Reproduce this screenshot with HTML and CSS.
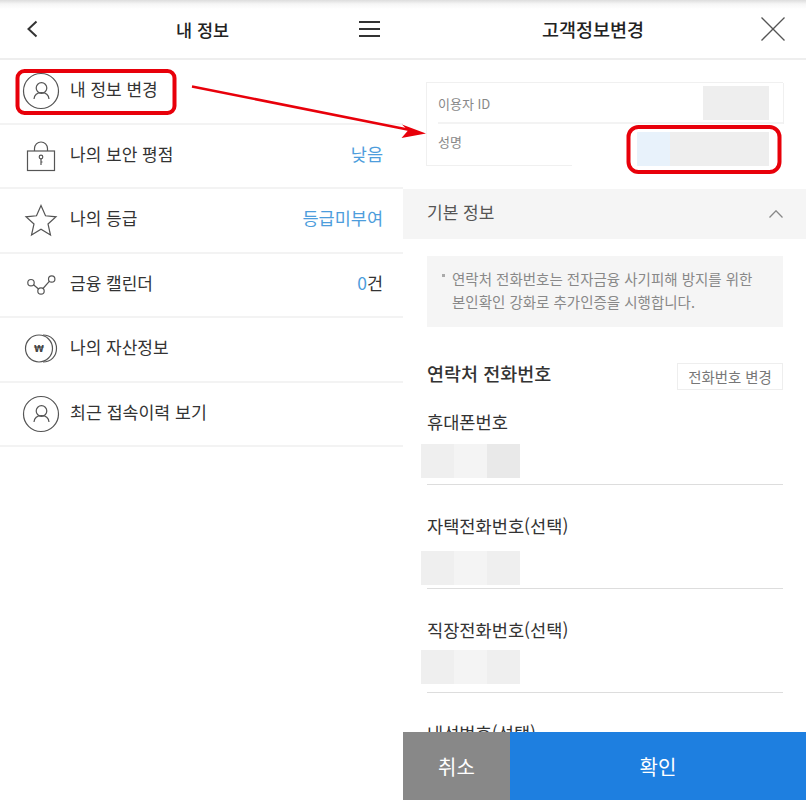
FILE: index.html
```html
<!DOCTYPE html>
<html lang="ko">
<head>
  <meta charset="UTF-8">
  <title>내 정보</title>
  <link rel="stylesheet" href="styles.css">
</head>
<body>

  <div class="screens">

    <section class="panel">
      <header class="topbar">
        <svg class="back-icon" width="46" height="30" viewBox="0 0 46 30"><path d="M36.500 7.500L28.500 15l8 7.500"/></svg>
        <h1 class="topbar-title">내 정보</h1>
        <svg class="menu-icon" width="21" height="16" viewBox="0 0 21 16"><path d="M0 1h21M0 8h21M0 15h21"/></svg>
      </header>

      <ul class="menu">
        <li class="menu-row">
          <svg class="row-icon" width="46" height="46" viewBox="0 0 46 46"><circle cx="23" cy="23" r="17.500"/><circle cx="23.500" cy="20" r="5.300"/><path d="M16 31c.5-4.500 3.500-6.300 7.500-6.300s7 1.800 7.500 6.300"/></svg>
          <span class="row-label">내 정보 변경</span>
        </li>
        <li class="menu-row">
          <svg class="row-icon" width="46" height="46" viewBox="0 0 46 46"><rect x="9.500" y="18" width="27" height="19.500"/><path d="M16.500 18v-2.500a6.500 6.500 0 0 1 13 0V18"/><circle cx="23" cy="24" r="1.800"/><path d="M23 25.800V32M23 29h1.500"/></svg>
          <span class="row-label">나의 보안 평점</span>
          <span class="row-value">낮음</span>
        </li>
        <li class="menu-row">
          <svg class="row-icon" width="46" height="46" viewBox="0 0 46 46"><path d="M23 8.500l4.500 10.300 10.500 1-8 7.200 2.500 11-9.500-5.700L13.500 38l2.500-11-8-7.200 10.500-1z"/></svg>
          <span class="row-label">나의 등급</span>
          <span class="row-value">등급미부여</span>
        </li>
        <li class="menu-row">
          <svg class="row-icon" width="46" height="46" viewBox="0 0 46 46"><circle cx="13" cy="20.700" r="3.200"/><circle cx="23" cy="29" r="3.200"/><circle cx="33.700" cy="17" r="3.200"/><path d="M15.500 22.700l5 4.300M25 26.500l6.500-7.300"/></svg>
          <span class="row-label">금융 캘린더</span>
          <span class="row-value"><span class="row-count">0</span><span class="row-unit">건</span></span>
        </li>
        <li class="menu-row">
          <svg class="row-icon" width="46" height="46" viewBox="0 0 46 46"><circle cx="21" cy="22.500" r="13.500"/><path d="M25 9c8 0 13.500 6 13.500 13.500S33 36 25 36"/><text class="won-mark" x="21" y="26" text-anchor="middle">₩</text></svg>
          <span class="row-label">나의 자산정보</span>
        </li>
        <li class="menu-row">
          <svg class="row-icon" width="46" height="46" viewBox="0 0 46 46"><circle cx="23" cy="23" r="17.500"/><circle cx="23.500" cy="20" r="5.300"/><path d="M16 31c.5-4.500 3.500-6.300 7.500-6.300s7 1.800 7.500 6.300"/></svg>
          <span class="row-label row-label-wide">최근 접속이력 보기</span>
        </li>
      </ul>
    </section>

    <section class="panel">
      <header class="topbar topbar-form">
        <h1 class="topbar-title">고객정보변경</h1>
        <svg class="close-icon" width="24" height="24" viewBox="0 0 24 24"><path d="M.5.500l23 23M23.500.500l-23 23"/></svg>
      </header>

      <div class="user-card">
        <div class="user-row user-row-id">
          <span class="user-label">이용자 ID</span>
          <span class="blur-box blur-id"></span>
        </div>
        <div class="user-row user-row-name">
          <span class="user-label">성명</span>
          <span class="blur-box blur-name"><i class="blur-blue"></i></span>
        </div>
        <div class="user-card-foot"></div>
      </div>

      <div class="section-band">
        <span>기본 정보</span>
        <svg class="fold-icon" width="14" height="8" viewBox="0 0 14 8"><path d="M.5 7.500L7 .8l6.500 6.700"/></svg>
      </div>

      <div class="notice">
        <i class="notice-dot"></i>
        <p>연락처 전화번호는 전자금융 사기피해 방지를 위한<br>본인확인 강화로 추가인증을 시행합니다.</p>
      </div>

      <div class="contact-head">
        <h2>연락처 전화번호</h2>
        <button class="change-btn">전화번호 변경</button>
      </div>

      <div class="field field-mobile">
        <label>휴대폰번호</label>
        <div class="blur-cells"><i class="c1"></i><i class="c2"></i><i class="c3"></i></div>
      </div>
      <div class="field field-home">
        <label>자택전화번호(선택)</label>
        <div class="blur-cells"><i class="c1"></i><i class="c2"></i><i class="c1"></i></div>
      </div>
      <div class="field field-work">
        <label>직장전화번호(선택)</label>
        <div class="blur-cells"><i class="c1"></i><i class="c2"></i><i class="c1"></i></div>
      </div>
      <div class="field field-ext">
        <label>내선번호(선택)</label>
      </div>

      <div class="actions">
        <button class="btn-cancel">취소</button>
        <button class="btn-ok">확인</button>
      </div>
    </section>

  </div>

  <svg class="marks" width="806" height="800" viewBox="0 0 806 800">
    <rect class="mark-box" x="17.500" y="71" width="157" height="42" rx="7"/>
    <rect class="mark-box" x="628.500" y="127" width="151" height="45" rx="10"/>
    <path class="mark-line" d="M192 86.500L410 130"/>
    <path class="mark-head" d="M426 133.500L402 124.500l6 6-6.500 7.500z"/>
  </svg>

</body>
</html>
```

FILE: styles.css
```css
* {
  box-sizing: border-box;
}
body {
  margin: 0;
  height: 800px;
  overflow: hidden;
  background: #fff;
  color: #333;
  font-family: "Noto Sans CJK KR", "Noto Sans", sans-serif;
}
h1, h2, p, ul {
  margin: 0;
  padding: 0;
}
button {
  font-family: inherit;
  border: 0;
  padding: 0;
}
.screens {
  display: flex;
  height: 800px;
}
.panel {
  position: relative;
  width: 403px;
  height: 800px;
  overflow: hidden;
}

/* top bar */
.topbar {
  display: flex;
  align-items: center;
  justify-content: space-between;
  height: 60px;
  padding-right: 23px;
  border-bottom: 2px solid #eee;
  background: linear-gradient(#ddd, #f6f6f6 4px, #fff 9px);
}
.topbar-title {
  font-size: 17.500px;
  font-weight: 500;
  color: #222;
}
.topbar-form {
  padding-left: 22px;
  padding-right: 21px;
}
.topbar-form .topbar-title {
  flex: 1;
  font-size: 18.500px;
  text-align: center;
}
.back-icon {
  fill: none;
  stroke: #333;
  stroke-width: 2;
}
.menu-icon {
  fill: none;
  stroke: #333;
  stroke-width: 2;
}
.close-icon {
  fill: none;
  stroke: #555;
  stroke-width: 1.300;
}

/* menu list */
.menu {
  list-style: none;
}
.menu-row {
  display: flex;
  align-items: center;
  height: 64.500px;
  padding: 0 20px 0 18px;
  border-bottom: 2px solid #f3f3f3;
}
.row-icon {
  flex: none;
  margin-right: 6px;
  fill: none;
  stroke: #555;
  stroke-width: 1.200;
}
.won-mark {
  fill: #444;
  stroke: none;
  font-family: "DejaVu Sans", sans-serif;
  font-size: 9px;
  font-weight: 700;
}
.row-label {
  flex: 1;
  margin-top: -5px;
  font-size: 17px;
  color: #333;
}
.row-label-wide {
  font-size: 17.300px;
}
.row-value {
  margin-top: -5px;
  font-size: 17.500px;
  color: #4d9ddc;
}
.row-count {
  color: #4d9ddc;
}
.row-unit {
  color: #333;
}

/* user card */
.user-card {
  margin: 22px 23px 0;
  border-top: 1px solid #f0f0f0;
  border-left: 1px solid #f0f0f0;
}
.user-row {
  display: flex;
  align-items: center;
  justify-content: space-between;
  height: 41px;
  margin-left: 11px;
  padding-right: 14px;
  font-size: 13px;
  color: #888;
}
.user-row-id {
  border-bottom: 2px solid #f3f3f3;
  box-shadow: 1px 0 0 #f0f0f0;
}
.user-row-id .user-label {
  margin-top: 1px;
}
.user-row-name .user-label {
  margin-top: -7px;
}
.blur-box {
  display: block;
  height: 34px;
  background: #eee;
}
.blur-id {
  width: 66px;
}
.blur-name {
  width: 132px;
  margin-top: 8px;
}
.blur-blue {
  display: block;
  width: 33px;
  height: 34px;
  background: #e8f2fb;
}
.user-card-foot {
  width: 145px;
  border-bottom: 1px solid #f0f0f0;
}

/* collapsible band */
.section-band {
  display: flex;
  align-items: center;
  justify-content: space-between;
  height: 50px;
  margin-top: 23px;
  padding: 0 23px 0 24px;
  background: #f5f5f5;
  font-size: 17px;
  color: #555;
}
.section-band span {
  margin-top: -5px;
}
.fold-icon {
  fill: none;
  stroke: #888;
  stroke-width: 1.300;
}

/* notice */
.notice {
  display: flex;
  height: 71px;
  margin: 17px 23px 0 24px;
  padding: 11px 0 0 15px;
  background: #f5f5f5;
  font-size: 14.500px;
  line-height: 23px;
  color: #888;
}
.notice-dot {
  flex: none;
  width: 3px;
  height: 3px;
  margin: 7px 7px 0 0;
  background: #aaa;
}

/* contact */
.contact-head {
  display: flex;
  align-items: flex-start;
  justify-content: space-between;
  height: 27px;
  margin: 36px 23px 0 24px;
}
.contact-head h2 {
  margin-top: -3px;
  font-size: 18.500px;
  font-weight: 500;
  color: #333;
}
.change-btn {
  width: 106px;
  height: 27px;
  background: #fff;
  border: 1px solid #eee;
  font-size: 14.400px;
  color: #777;
}

/* phone fields */
.field {
  margin: 0 23px 0 24px;
  border-bottom: 1px solid #ddd;
}
.field label {
  display: block;
  font-size: 17.600px;
  line-height: 27px;
  color: #333;
}
.field-mobile {
  height: 77px;
  margin-top: 18px;
}
.field-mobile label {
  height: 36px;
}
.field-home {
  height: 77px;
  margin-top: 27px;
}
.field-home label {
  height: 39px;
}
.field-work {
  height: 77px;
  margin-top: 27px;
}
.field-work label {
  height: 34px;
}
.field-ext {
  margin-top: 26px;
  border-bottom: 0;
}
.blur-cells {
  display: flex;
  width: 99px;
  height: 34px;
  margin-left: -6px;
}
.blur-cells i {
  flex: 1;
}
.c1 {
  background: #efefef;
}
.c2 {
  background: #f4f4f4;
}
.c3 {
  background: #e9e9e9;
}

/* bottom actions */
.actions {
  position: absolute;
  left: 0;
  right: 0;
  bottom: 0;
  display: flex;
  height: 68px;
}
.btn-cancel {
  width: 107px;
  background: #888;
  color: #fff;
  font-size: 20px;
}
.btn-ok {
  flex: 1;
  background: #1e7fe0;
  color: #fff;
  font-size: 20px;
}

/* red marks drawn over the screenshots */
.marks {
  position: absolute;
  top: 0;
  left: 0;
  pointer-events: none;
}
.mark-box {
  fill: none;
  stroke: #e8000a;
  stroke-width: 4;
}
.mark-line {
  fill: none;
  stroke: #e8000a;
  stroke-width: 2.500;
}
.mark-head {
  fill: #e8000a;
}
```
